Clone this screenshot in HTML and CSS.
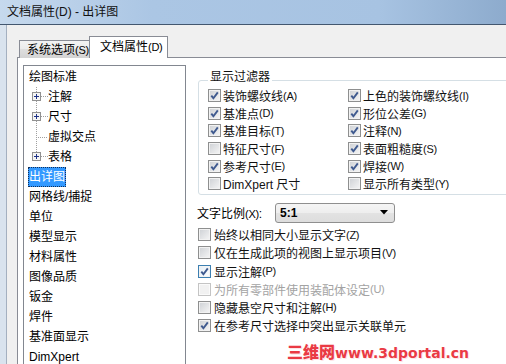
FILE: index.html
```html
<!DOCTYPE html>
<html lang="zh-CN">
<head>
    <meta charset="UTF-8">
    <title>文档属性(D) - 出详图</title>
    <link rel="stylesheet" href="styles.css">
</head>
<body>
    <div class="titlebar">文档属性(D) - 出详图</div>
    <div class="window">
        <div class="frame"></div>
        <div class="client">
            <div class="tabs">
                <div class="tab">系统选项<span class="key">(S)</span></div>
                <div class="tab active">文档属性<span class="key">(D)</span></div>
            </div>
            <div class="panel">
                <ul class="tree">
                    <li>绘图标准</li>
                    <li class="child">
                        <svg class="twig" width="19" height="20" viewBox="0 0 19 20">
                            <path class="dots" d="M7.5 0V5M7.5 14V20M12 9.5H19"/>
                            <rect class="expander" x="3.5" y="5.5" width="8" height="8"/>
                            <path class="plus" d="M5 9.5H10M7.5 7V12"/>
                        </svg>注解
                    </li>
                    <li class="child">
                        <svg class="twig" width="19" height="20" viewBox="0 0 19 20">
                            <path class="dots" d="M7.5 0V5M7.5 14V20M12 9.5H19"/>
                            <rect class="expander" x="3.5" y="5.5" width="8" height="8"/>
                            <path class="plus" d="M5 9.5H10M7.5 7V12"/>
                        </svg>尺寸
                    </li>
                    <li class="child">
                        <svg class="twig" width="19" height="20" viewBox="0 0 19 20">
                            <path class="dots" d="M7.5 0V20M9 10.5H19"/>
                        </svg>虚拟交点
                    </li>
                    <li class="child">
                        <svg class="twig" width="19" height="20" viewBox="0 0 19 20">
                            <path class="dots" d="M7.5 0V5M12 9.5H19"/>
                            <rect class="expander" x="3.5" y="5.5" width="8" height="8"/>
                            <path class="plus" d="M5 9.5H10M7.5 7V12"/>
                        </svg>表格
                    </li>
                    <li><span class="selected">出详图</span></li>
                    <li>网格线/捕捉</li>
                    <li>单位</li>
                    <li>模型显示</li>
                    <li>材料属性</li>
                    <li>图像品质</li>
                    <li>钣金</li>
                    <li>焊件</li>
                    <li>基准面显示</li>
                    <li>DimXpert</li>
                </ul>

                <div class="settings">
                    <fieldset class="filters">
                        <legend>显示过滤器</legend>
                        <div class="filter-grid">
                            <label class="check"><span class="box checked"><svg viewBox="0 0 11 11"><path d="M2.3 5.6L4.4 8.2L8.8 2.4"/></svg></span>装饰螺纹线<span class="key">(A)</span></label>
                            <label class="check"><span class="box checked"><svg viewBox="0 0 11 11"><path d="M2.3 5.6L4.4 8.2L8.8 2.4"/></svg></span>上色的装饰螺纹线<span class="key">(I)</span></label>
                            <label class="check"><span class="box checked"><svg viewBox="0 0 11 11"><path d="M2.3 5.6L4.4 8.2L8.8 2.4"/></svg></span>基准点<span class="key">(D)</span></label>
                            <label class="check"><span class="box checked"><svg viewBox="0 0 11 11"><path d="M2.3 5.6L4.4 8.2L8.8 2.4"/></svg></span>形位公差<span class="key">(G)</span></label>
                            <label class="check"><span class="box checked"><svg viewBox="0 0 11 11"><path d="M2.3 5.6L4.4 8.2L8.8 2.4"/></svg></span>基准目标<span class="key">(T)</span></label>
                            <label class="check"><span class="box checked"><svg viewBox="0 0 11 11"><path d="M2.3 5.6L4.4 8.2L8.8 2.4"/></svg></span>注释<span class="key">(N)</span></label>
                            <label class="check"><span class="box"></span>特征尺寸<span class="key">(F)</span></label>
                            <label class="check"><span class="box checked"><svg viewBox="0 0 11 11"><path d="M2.3 5.6L4.4 8.2L8.8 2.4"/></svg></span>表面粗糙度<span class="key">(S)</span></label>
                            <label class="check"><span class="box checked"><svg viewBox="0 0 11 11"><path d="M2.3 5.6L4.4 8.2L8.8 2.4"/></svg></span>参考尺寸<span class="key">(E)</span></label>
                            <label class="check"><span class="box checked"><svg viewBox="0 0 11 11"><path d="M2.3 5.6L4.4 8.2L8.8 2.4"/></svg></span>焊接<span class="key">(W)</span></label>
                            <label class="check"><span class="box"></span>DimXpert 尺寸</label>
                            <label class="check"><span class="box"></span>显示所有类型<span class="key">(Y)</span></label>
                        </div>
                    </fieldset>

                    <div class="scale-row">
                        <span class="scale-label">文字比例<span class="key">(X)</span>:</span>
                        <div class="select">
                            <span>5:1</span>
                            <svg width="8" height="5" viewBox="0 0 8 5"><path d="M0 0H8L4 4.5Z"/></svg>
                        </div>
                    </div>

                    <div class="options">
                        <label class="check"><span class="box"></span>始终以相同大小显示文字<span class="key">(Z)</span></label>
                        <label class="check"><span class="box"></span>仅在生成此项的视图上显示项目<span class="key">(V)</span></label>
                        <label class="check"><span class="box checked focused"><svg viewBox="0 0 11 11"><path d="M2.3 5.6L4.4 8.2L8.8 2.4"/></svg></span>显示注解<span class="key">(P)</span></label>
                        <label class="check disabled"><span class="box"></span>为所有零部件使用装配体设定<span class="key">(U)</span></label>
                        <label class="check"><span class="box"></span>隐藏悬空尺寸和注解<span class="key">(H)</span></label>
                        <label class="check"><span class="box checked"><svg viewBox="0 0 11 11"><path d="M2.3 5.6L4.4 8.2L8.8 2.4"/></svg></span>在参考尺寸选择中突出显示关联单元</label>
                    </div>
                </div>
            </div>
        </div>
    </div>
    <div class="watermark"><span class="wm-cn">三维网</span>www.3dportal.cn</div>
</body>
</html>
```

FILE: styles.css
```css
body {
    margin: 0;
    width: 506px;
    height: 364px;
    overflow: hidden;
    position: relative;
    font-family: "Liberation Sans", "Noto Sans CJK SC", sans-serif;
    font-size: 12px;
    color: #000;
    background-color: #f0f0f0;
}
.titlebar {
    height: 24px;
    line-height: 24px;
    padding-left: 7px;
    border-bottom: 1px solid #43576f;
    background: linear-gradient(to right, #c6d9ed 0%, #abc6e4 30%, #a7c3e2 75%, #8dabcd 100%);
    color: #111;
}
.window {
    display: flex;
    height: 339px;
}
.frame {
    width: 6px;
    background-color: #d9e3ee;
    border-right: 1px solid #a4b0c0;
}
.client {
    flex: 1;
    padding-left: 10px;
    padding-top: 11px;
    overflow: hidden;
}

/* tabs */
.tabs {
    display: flex;
    align-items: flex-end;
    padding-left: 2px;
    margin-bottom: -1px;
}
.tab {
    box-sizing: border-box;
    height: 18px;
    width: 70px;
    padding-left: 7px;
    line-height: 18px;
    border: 1px solid #898c95;
    border-right: none;
    border-bottom: none;
    background: linear-gradient(#f3f3f3, #ebebeb 50%, #dedede 50%, #d3d3d3);
    white-space: nowrap;
}
.tab.active {
    position: relative;
    width: 79px;
    height: 22px;
    padding-left: 10px;
    line-height: 21px;
    border-right: 1px solid #898c95;
    background: #fff;
}
.key {
    font-size: 11px;
    letter-spacing: -0.3px;
}
.panel {
    display: flex;
    height: 320px;
    padding: 7px 0 0 5px;
    background-color: #fff;
    border-top: 1px solid #898c95;
    border-left: 1px solid #898c95;
}

/* tree */
.tree {
    list-style: none;
    margin: 0;
    padding: 1px 0 0 5px;
    width: 156px;
    height: 320px;
    border: 1px solid #828790;
    overflow: hidden;
    flex: none;
}
.tree li {
    height: 20px;
    line-height: 20px;
    white-space: nowrap;
}
.tree li.child {
    display: flex;
    align-items: center;
}
.twig {
    flex: none;
}
.twig .dots {
    fill: none;
    stroke: #a0a0a0;
    stroke-width: 1;
    stroke-dasharray: 1 1;
}
.twig .expander {
    fill: #f4f4f4;
    stroke: #919191;
}
.twig .plus {
    fill: none;
    stroke: #1e3287;
}
.selected {
    display: inline-block;
    height: 18px;
    line-height: 18px;
    margin-left: -1px;
    border: 1px dotted #12305a;
    background-color: #3399ff;
    color: #fff;
}

/* right column */
.settings {
    flex: none;
    width: 320px;
    margin-left: 11px;
    padding-top: 4px;
}
.filters {
    margin: 0 0 0 1px;
    width: 312px;
    padding: 0 8px 1px 9px;
    border: 1px solid #d5dfe5;
    border-radius: 3px;
}
.filters legend {
    padding: 0 2px 6px;
    line-height: 16px;
    color: #111;
}
.filter-grid {
    display: grid;
    grid-template-columns: 140px 1fr;
    grid-auto-rows: 17.6px;
    margin-top: -4px;
}
.check {
    display: flex;
    align-items: center;
    white-space: nowrap;
    color: #111;
}
.check.disabled {
    color: #a3a3a3;
}
.box {
    box-sizing: border-box;
    width: 13px;
    height: 13px;
    margin-right: 2px;
    flex: none;
    border: 1px solid #8e8f8f;
    background: linear-gradient(135deg, #cdd0d4, #f6f6f6);
    box-shadow: inset 0 0 0 1px #f2f2f2;
}
.box svg {
    display: block;
    width: 11px;
    height: 11px;
}
.box svg path {
    fill: none;
    stroke: #3f5a8f;
    stroke-width: 1.9;
}
.box.focused {
    border-color: #3c7fb1;
    background: linear-gradient(135deg, #e4eef6, #fdfdfd);
}
.disabled .box {
    border-color: #c4c4c4;
    background: #f1f1f1;
    box-shadow: inset 0 0 0 1px #fafafa;
}

.scale-row {
    display: flex;
    align-items: center;
    height: 20px;
    margin-top: 8px;
}
.scale-label {
    width: 78px;
}
.select {
    box-sizing: border-box;
    width: 120px;
    height: 20px;
    display: flex;
    align-items: center;
    justify-content: space-between;
    padding: 0 6px 0 4px;
    border: 1px solid #8f8f8f;
    border-radius: 3px;
    background: linear-gradient(#f5f5f5, #eeeeee 50%, #e3e3e3 50%, #dddddd);
    font-weight: bold;
}
.select svg path {
    fill: #000;
}
.options {
    margin-top: 3px;
    margin-left: 1px;
    display: grid;
    grid-auto-rows: 18.2px;
}
.options .box {
    margin-right: 3px;
}

.watermark {
    position: absolute;
    left: 287px;
    top: 341px;
    line-height: 20px;
    font-family: "DejaVu Sans", sans-serif;
    font-weight: bold;
    font-size: 14px;
    color: #ea3a44;
    text-shadow: 0 0 1px #fff, 1px 1px 0 #fde3e5;
    white-space: nowrap;
}
.wm-cn {
    font-family: "Noto Sans CJK SC", sans-serif;
    font-size: 16px;
    font-weight: 900;
}
```
